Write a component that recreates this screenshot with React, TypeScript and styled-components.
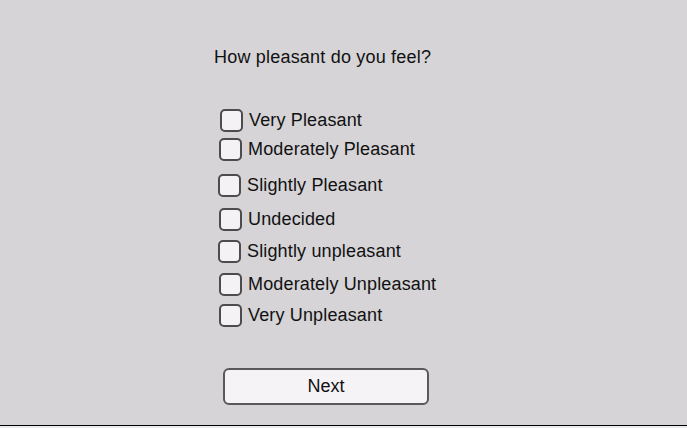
import React from "react";
import styled, { createGlobalStyle } from "styled-components";

const Global = createGlobalStyle`
  html, body { margin: 0; padding: 0; background: #ecebed; }
  body { font-family: "Liberation Sans", Arial, sans-serif; }
`;

const Screen = styled.div`
  width: 687px;
  height: 426px;
  background: #d6d4d7;
  border-bottom: 1px solid #000;
  display: flex;
  flex-direction: column;
  padding-left: 214px;
  box-sizing: border-box;
  color: #111;
`;

const Title = styled.div`
  margin-top: 46px;
  font-size: 18px;
  line-height: 22px;
  letter-spacing: 0.2px;
`;

const Options = styled.div`
  display: flex;
  flex-direction: column;
  margin-top: 41px;
  padding-left: 5px;
`;

const Row = styled.label<{ $gap: number; $shift: number }>`
  display: flex;
  align-items: center;
  gap: 6px;
  height: 23px;
  margin-top: ${(p) => p.$gap}px;
  margin-left: ${(p) => p.$shift}px;
  font-size: 18px;
  letter-spacing: 0.15px;
  cursor: pointer;
`;

const Box = styled.span`
  width: 23px;
  height: 23px;
  box-sizing: border-box;
  border: 2px solid #4d4b4e;
  border-radius: 5px;
  background: #f4f2f5;
  flex: none;
`;

const Next = styled.button`
  margin-top: 41px;
  margin-left: 9px;
  width: 206px;
  height: 37px;
  box-sizing: border-box;
  border: 2px solid #5a585b;
  border-radius: 6px;
  background: #f5f3f6;
  font-family: "Liberation Sans", Arial, sans-serif;
  font-size: 18px;
  color: #111;
  padding: 0;
  cursor: pointer;
`;

const options: { label: string; gap: number; shift: number }[] = [
  { label: "Very Pleasant", gap: 0, shift: 1 },
  { label: "Moderately Pleasant", gap: 6, shift: 0 },
  { label: "Slightly Pleasant", gap: 13, shift: -1 },
  { label: "Undecided", gap: 11, shift: 0 },
  { label: "Slightly unpleasant", gap: 9, shift: -1 },
  { label: "Moderately Unpleasant", gap: 10, shift: 0 },
  { label: "Very Unpleasant", gap: 8, shift: 0 },
];

export default function App() {
  return (
    <>
      <Global />
      <Screen>
        <Title>How pleasant do you feel?</Title>
        <Options>
          {options.map((o) => (
            <Row key={o.label} $gap={o.gap} $shift={o.shift}>
              <Box />
              {o.label}
            </Row>
          ))}
        </Options>
        <Next>Next</Next>
      </Screen>
    </>
  );
}
